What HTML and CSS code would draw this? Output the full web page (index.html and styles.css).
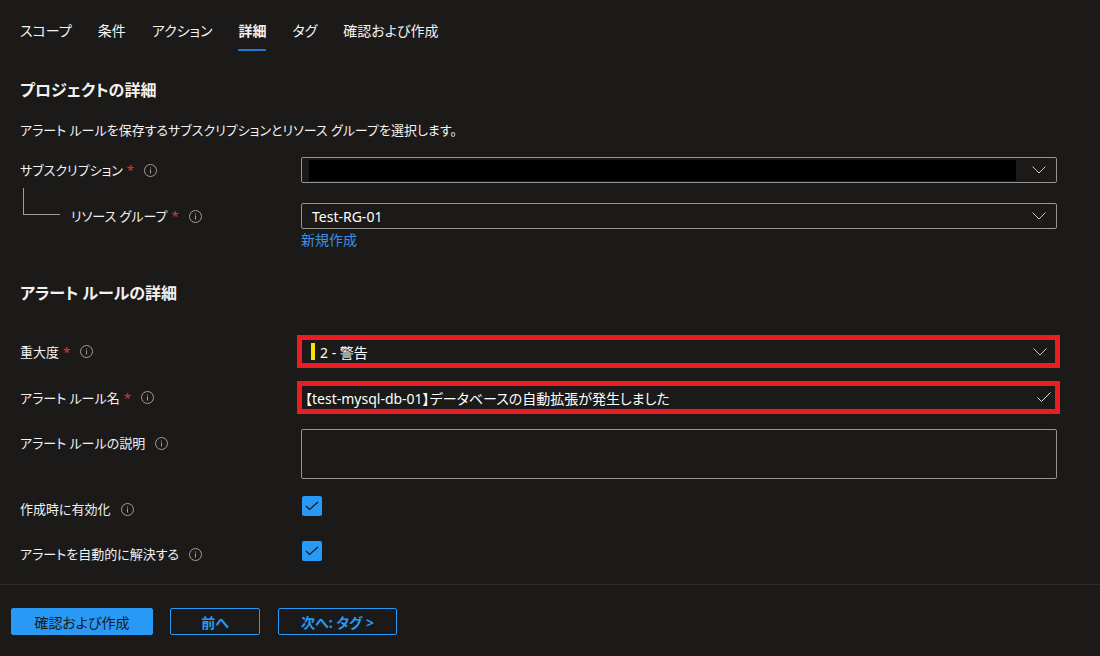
FILE: index.html
```html
<!DOCTYPE html>
<html lang="ja">
<head>
    <meta charset="UTF-8">
    <title>アラート ルールの作成</title>
    <link rel="stylesheet" href="styles.css">
</head>
<body>
    <nav class="tabs">
        <span class="tab">スコープ</span>
        <span class="tab">条件</span>
        <span class="tab">アクション</span>
        <span class="tab active">詳細</span>
        <span class="tab">タグ</span>
        <span class="tab">確認および作成</span>
    </nav>

    <main class="content">
        <h2 class="section-title first">プロジェクトの詳細</h2>
        <p class="section-desc">アラート ルールを保存するサブスクリプションとリソース グループを選択します。</p>

        <div class="row row-sub">
            <div class="label">サブスクリプション<span class="req">*</span><span class="info"><svg width="13" height="13" viewBox="0 0 13 13"><circle cx="6.5" cy="6.5" r="6" fill="none" stroke="#a19f9d"/><rect x="6" y="5.5" width="1" height="4" fill="#a19f9d"/><rect x="6" y="3.5" width="1" height="1" fill="#a19f9d"/></svg></span></div>
            <div class="field field-sub">
                <span class="redact"></span>
                <svg class="chev" width="14" height="8" viewBox="0 0 14 8"><polyline points="0.5,0.5 7,7 13.5,0.5" fill="none" stroke="#c8c6c4"/></svg>
            </div>
        </div>

        <div class="row row-rg">
            <div class="label"><span class="tree"></span>リソース グループ<span class="req">*</span><span class="info"><svg width="13" height="13" viewBox="0 0 13 13"><circle cx="6.5" cy="6.5" r="6" fill="none" stroke="#a19f9d"/><rect x="6" y="5.5" width="1" height="4" fill="#a19f9d"/><rect x="6" y="3.5" width="1" height="1" fill="#a19f9d"/></svg></span></div>
            <div class="field">
                <span class="value">Test-RG-01</span>
                <svg class="chev" width="14" height="8" viewBox="0 0 14 8"><polyline points="0.5,0.5 7,7 13.5,0.5" fill="none" stroke="#c8c6c4"/></svg>
            </div>
        </div>
        <div class="row row-link">
            <div class="label"></div>
            <a class="new-link" href="#">新規作成</a>
        </div>

        <h2 class="section-title second">アラート ルールの詳細</h2>

        <div class="row row-sev">
            <div class="label">重大度<span class="req">*</span><span class="info"><svg width="13" height="13" viewBox="0 0 13 13"><circle cx="6.5" cy="6.5" r="6" fill="none" stroke="#a19f9d"/><rect x="6" y="5.5" width="1" height="4" fill="#a19f9d"/><rect x="6" y="3.5" width="1" height="1" fill="#a19f9d"/></svg></span></div>
            <div class="field marked field-sev">
                <span class="value"><span class="sev-bar"></span>2 - 警告</span>
                <svg class="chev" width="14" height="8" viewBox="0 0 14 8"><polyline points="0.5,0.5 7,7 13.5,0.5" fill="none" stroke="#c8c6c4"/></svg>
            </div>
        </div>

        <div class="row row-name">
            <div class="label">アラート ルール名<span class="req">*</span><span class="info"><svg width="13" height="13" viewBox="0 0 13 13"><circle cx="6.5" cy="6.5" r="6" fill="none" stroke="#a19f9d"/><rect x="6" y="5.5" width="1" height="4" fill="#a19f9d"/><rect x="6" y="3.5" width="1" height="1" fill="#a19f9d"/></svg></span></div>
            <div class="field marked field-name">
                <span class="value">【test-mysql-db-01】データベースの自動拡張が発生しました</span>
                <svg class="ok" width="14" height="11" viewBox="0 0 14 11"><polyline points="0.5,5.5 4.5,9.5 13.5,0.5" fill="none" stroke="#e1dfdd"/></svg>
            </div>
        </div>

        <div class="row row-desc">
            <div class="label">アラート ルールの説明<span class="info"><svg width="13" height="13" viewBox="0 0 13 13"><circle cx="6.5" cy="6.5" r="6" fill="none" stroke="#a19f9d"/><rect x="6" y="5.5" width="1" height="4" fill="#a19f9d"/><rect x="6" y="3.5" width="1" height="1" fill="#a19f9d"/></svg></span></div>
            <div class="textarea"></div>
        </div>

        <div class="row row-check first-check">
            <div class="label">作成時に有効化<span class="info"><svg width="13" height="13" viewBox="0 0 13 13"><circle cx="6.5" cy="6.5" r="6" fill="none" stroke="#a19f9d"/><rect x="6" y="5.5" width="1" height="4" fill="#a19f9d"/><rect x="6" y="3.5" width="1" height="1" fill="#a19f9d"/></svg></span></div>
            <span class="checkbox"><svg width="14" height="10" viewBox="0 0 14 10"><polyline points="1,5 4.5,8.5 13,1" fill="none" stroke="#1b1a19" stroke-width="1.2"/></svg></span>
        </div>

        <div class="row row-check second-check">
            <div class="label">アラートを自動的に解決する<span class="info"><svg width="13" height="13" viewBox="0 0 13 13"><circle cx="6.5" cy="6.5" r="6" fill="none" stroke="#a19f9d"/><rect x="6" y="5.5" width="1" height="4" fill="#a19f9d"/><rect x="6" y="3.5" width="1" height="1" fill="#a19f9d"/></svg></span></div>
            <span class="checkbox"><svg width="14" height="10" viewBox="0 0 14 10"><polyline points="1,5 4.5,8.5 13,1" fill="none" stroke="#1b1a19" stroke-width="1.2"/></svg></span>
        </div>
    </main>

    <footer class="footer">
        <button class="btn primary">確認および作成</button>
        <button class="btn outline btn-prev">前へ</button>
        <button class="btn outline btn-next">次へ: タグ &gt;</button>
    </footer>
</body>
</html>
```

FILE: styles.css
```css
body {
    margin: 0;
    background-color: #1b1a19;
    color: #f3f2f1;
    font-family: "Noto Sans", "Noto Sans CJK JP", sans-serif;
    font-feature-settings: "palt";
    font-size: 13px;
    width: 1100px;
    height: 656px;
    overflow: hidden;
}
.tabs {
    display: flex;
    gap: 26px;
    padding: 21px 0 0 20px;
    height: 30px;
}
.tab {
    font-size: 14px;
    line-height: 20px;
    height: 20px;
    padding-bottom: 8px;
    border-bottom: 2px solid transparent;
    color: #f3f2f1;
}
.tab.active {
    font-weight: bold;
    border-bottom-color: #1f76cc;
}
.content {
    padding-left: 20px;
}
.section-title {
    margin: 0;
    font-size: 16px;
    font-weight: bold;
    line-height: 22px;
}
.section-title.first {
    margin-top: 28px;
}
.section-title.second {
    margin-top: 33px;
}
.section-desc {
    margin: 19px 0 0;
    line-height: 20px;
}
.row {
    display: flex;
    align-items: center;
}
.label {
    display: flex;
    align-items: center;
    width: 281px;
    flex-shrink: 0;
    line-height: 20px;
}
.req {
    color: #e0353a;
    margin-left: 4px;
    font-size: 13px;
}
.info {
    display: inline-flex;
    margin-left: 10px;
}
.row-sub {
    margin-top: 17px;
}
.row-rg {
    margin-top: 20px;
}
.row-rg .label {
    padding-left: 3px;
    width: 278px;
}
.tree {
    align-self: flex-start;
    width: 36px;
    height: 26px;
    margin-top: -18px;
    margin-right: 11px;
    border-left: 1px solid #a19f9d;
    border-bottom: 1px solid #a19f9d;
}
.field {
    box-sizing: border-box;
    width: 756px;
    height: 26px;
    border: 1px solid #979593;
    border-radius: 2px;
    display: flex;
    align-items: center;
    justify-content: space-between;
    padding: 0 10px 0 10px;
    color: #ffffff;
    font-size: 14px;
}
.field-sub {
    padding-left: 7px;
}
.redact {
    display: block;
    width: 707px;
    height: 21px;
    background: #000000;
}
.row-link {
    margin-top: 2px;
}
.new-link {
    color: #3b91e8;
    text-decoration: none;
    line-height: 18px;
    font-size: 14px;
}
.field.marked {
    width: 763px;
    height: 33px;
    margin-left: -4px;
    border: 5px solid #ec1c24;
    border-radius: 0;
}
.row-sev {
    margin-top: 31px;
}
.field-sev {
    padding: 0 8px 0 9px;
}
.sev-bar {
    display: inline-block;
    width: 4px;
    height: 17px;
    background: #fce100;
    margin-right: 5px;
}
.field-sev .value {
    display: flex;
    align-items: center;
}
.row-name {
    margin-top: 13px;
}
.field-name {
    padding: 0 4px 0 3px;
}
.row-desc {
    margin-top: 15px;
    align-items: flex-start;
}
.row-desc .label {
    padding-top: 4px;
}
.textarea {
    box-sizing: border-box;
    width: 756px;
    height: 50px;
    border: 1px solid #979593;
    border-radius: 2px;
}
.row-check {
    align-items: flex-start;
}
.row-check .label {
    padding-top: 3px;
}
.first-check {
    margin-top: 17px;
}
.second-check {
    margin-top: 22px;
}
.checkbox {
    width: 20px;
    height: 20px;
    margin-left: 1px;
    border-radius: 2px;
    background: #2899f5;
    display: flex;
    align-items: center;
    justify-content: center;
}
.footer {
    margin-top: 20px;
    border-top: 1px solid #2e2d2c;
    padding: 23px 0 0 11px;
    display: flex;
    gap: 17px;
}
.btn {
    box-sizing: border-box;
    height: 27px;
    border-radius: 2px;
    font-family: inherit;
    font-feature-settings: "palt";
    font-size: 14px;
    cursor: pointer;
    padding: 0;
}
.btn.primary {
    width: 142px;
    background: #2899f5;
    border: 1px solid #2899f5;
    color: #1b1a19;
}
.btn.outline {
    background: transparent;
    border: 1px solid #2899f5;
    color: #2899f5;
    font-weight: bold;
}
.btn-prev {
    width: 90px;
}
.btn-next {
    width: 119px;
    margin-left: 1px;
}
```
